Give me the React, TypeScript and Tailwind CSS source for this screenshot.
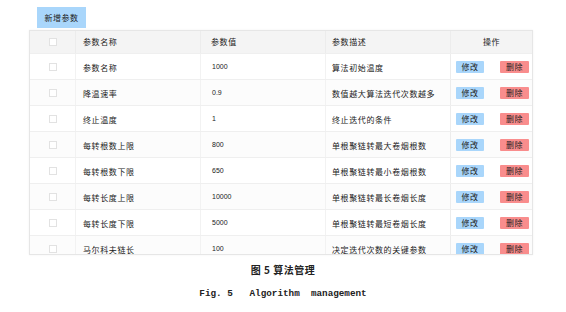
const rows = [
  { name: "参数名称", value: "1000", desc: "算法初始温度" },
  { name: "降温速率", value: "0.9", desc: "数值越大算法迭代次数越多" },
  { name: "终止温度", value: "1", desc: "终止迭代的条件" },
  { name: "每转根数上限", value: "800", desc: "单根聚链转最大卷烟根数" },
  { name: "每转根数下限", value: "650", desc: "单根聚链转最小卷烟根数" },
  { name: "每转长度上限", value: "10000", desc: "单根聚链转最长卷烟长度" },
  { name: "每转长度下限", value: "5000", desc: "单根聚链转最短卷烟长度" },
  { name: "马尔科夫链长", value: "100", desc: "决定迭代次数的关键参数" },
];

const cjk = "font-['Noto_Sans_CJK_SC',sans-serif]";

function Box() {
  return <div className="h-[8px] w-[8px] border border-[#e2e2e2] bg-white" />;
}

export default function App() {
  return (
    <main className={`relative h-[312px] w-[566px] overflow-hidden bg-white ${cjk} text-[#222]`}>
      <div className="flex pl-[37px] pt-[7px]">
        <button className="flex h-[21px] w-[49px] items-center justify-center bg-[#a9d6fb] text-[8px] leading-none tracking-[0.5px] text-[#222]">
          新增参数
        </button>
      </div>

      <div className="ml-[29px] mt-[2px] h-[225px] w-[504px] overflow-hidden border border-[#e6e6e6] shadow-[0_0_2px_rgba(0,0,0,0.06)]">
        <div className="flex h-[22px] items-center bg-[#f4f4f4] text-[8px] tracking-[0.6px]">
          <div className="flex h-full w-[46px] items-center justify-center border-r border-[#ececec]">
            <Box />
          </div>
          <div className="flex h-full w-[125px] items-center border-r border-[#ececec] pl-[7px]">参数名称</div>
          <div className="flex h-full w-[125px] items-center border-r border-[#ececec] pl-[10px]">参数值</div>
          <div className="flex h-full w-[125px] items-center border-r border-[#ececec] pl-[6px]">参数描述</div>
          <div className="flex h-full flex-1 items-center justify-center">操作</div>
        </div>

        {rows.map((r, i) => (
          <div
            key={i}
            className={`flex h-[26px] items-center border-t border-[#efefef] text-[8px] tracking-[0.6px] ${i % 2 === 1 ? "bg-[#fcfcfc]" : "bg-white"}`}
          >
            <div className="flex h-full w-[46px] items-center justify-center border-r border-[#f2f2f2]">
              <Box />
            </div>
            <div className="flex h-full w-[125px] items-center border-r border-[#f2f2f2] pl-[7px] pt-[2px]">{r.name}</div>
            <div className="flex h-full w-[125px] items-center border-r border-[#f2f2f2] pl-[11px] pt-[2px] font-['Liberation_Sans',sans-serif] text-[7px] tracking-[0px]">
              {r.value}
            </div>
            <div className="flex h-full w-[125px] items-center border-r border-[#ececec] pl-[6px] pt-[2px]">{r.desc}</div>
            <div className="flex h-full flex-1 items-center gap-[16px] pl-[5px]">
              <span className="flex h-[12px] w-[28px] items-center justify-center rounded-[1px] bg-[#a9d6fb]">修改</span>
              <span className="flex h-[12px] w-[29px] items-center justify-center rounded-[1px] bg-[#f98d8d]">删除</span>
            </div>
          </div>
        ))}
      </div>

      <div className="mt-[8px] text-center text-[10px] font-bold leading-[14px] tracking-[0.5px]">图 5 算法管理</div>
      <div className="mt-[11px] whitespace-pre text-center font-['Liberation_Mono',monospace] text-[9.3px] font-bold leading-[12px]">
        {"Fig. 5   Algorithm  management"}
      </div>
    </main>
  );
}
